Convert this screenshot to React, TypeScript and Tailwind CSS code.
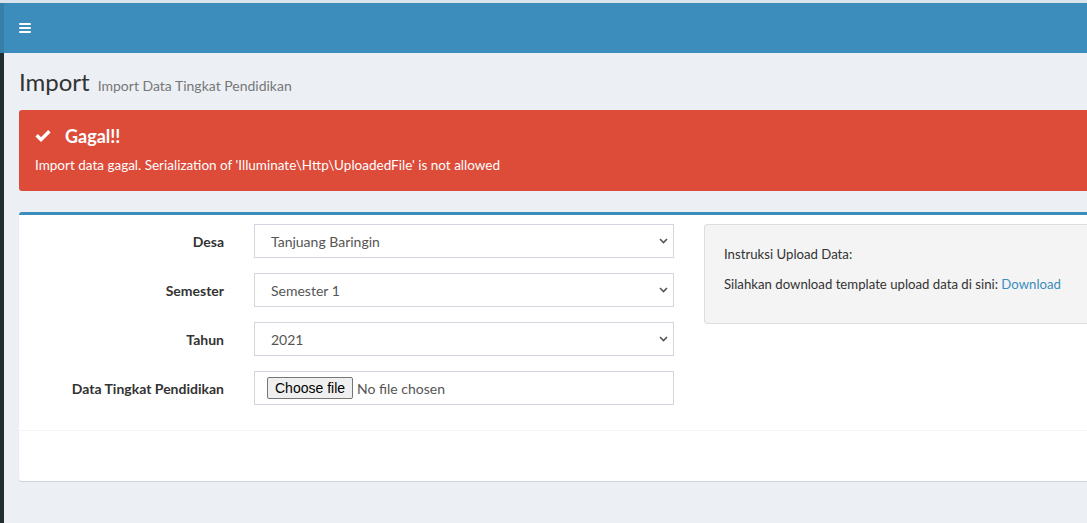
import { useState } from "react";

type FieldRow = {
  label: string;
  options: string[];
};

const selectRows: FieldRow[] = [
  { label: "Desa", options: ["Tanjuang Baringin"] },
  { label: "Semester", options: ["Semester 1", "Semester 2"] },
  { label: "Tahun", options: ["2021", "2020"] },
];

const inputClass =
  "h-[34px] w-[420px] appearance-none border border-[#d2d6de] bg-white pl-[16px] text-[14px] text-[#555] outline-none";

export default function App() {
  const [values, setValues] = useState<Record<string, string>>({});

  return (
    <div
      className="flex h-[523px] w-[1087px] overflow-hidden bg-[#ecf0f5] text-[#333]"
      style={{ fontFamily: "Lato, 'Liberation Sans', sans-serif" }}
    >
      {/* sidebar strip */}
      <div className="flex w-[4px] shrink-0 flex-col">
        <div className="h-[3px] bg-[#d9e4ec]" />
        <div className="h-[50px] bg-[#367fa9]" />
        <div className="flex-1 bg-[#222d32]" />
      </div>

      <div className="flex w-[1400px] shrink-0 flex-col">
        <header className="h-[53px] border-t-[3px] border-[#d9e4ec] bg-[#3c8dbc]">
          <button className="flex h-[50px] items-center px-[15px]">
            <svg width="12" height="12" viewBox="0 0 12 12" fill="#fff">
              <rect x="0" y="1" width="12" height="2" rx="1" />
              <rect x="0" y="5" width="12" height="2" rx="1" />
              <rect x="0" y="9" width="12" height="2" rx="1" />
            </svg>
          </button>
        </header>

        <section className="px-[15px] pt-[15px]">
          <h1 className="flex items-baseline gap-[8px] text-[24px] leading-[28px] text-[#333]">
            Import
            <small className="text-[14px] text-[#777]">Import Data Tingkat Pendidikan</small>
          </h1>
        </section>

        <section className="px-[15px] pt-[10px]">
          <div className="rounded-[3px] bg-[#dd4b39] px-[16px] pt-[14px] pb-[16px] text-white">
            <h4 className="flex items-center gap-[14px] text-[18px] font-bold leading-[24px]">
              <svg width="16" height="14" viewBox="0 0 16 13" fill="#fff">
                <path d="M0.4 7 L2.8 4.6 L6 7.8 L13.2 0.6 L15.6 3 L6 12.6 Z" />
              </svg>
              Gagal!!
            </h4>
            <p className="mt-[7px] text-[13.5px] leading-[20px]">
              Import data gagal. Serialization of 'Illuminate\Http\UploadedFile' is not allowed
            </p>
          </div>

          <div className="mt-[21px] rounded-[3px] border-t-[3px] border-[#3c8dbc] bg-white shadow-[0_1px_1px_rgba(0,0,0,0.12)]">
            <div className="flex px-[10px] pt-[9px] pb-[25px]">
              <div className="flex w-[660px] flex-col gap-[15px]">
                {selectRows.map((row) => (
                  <div key={row.label} className="flex items-center">
                    <label className="w-[210px] pr-[15px] text-right text-[14px] font-bold">
                      {row.label}
                    </label>
                    <div className="relative pl-[15px]">
                      <select
                        className={inputClass}
                        value={values[row.label] ?? row.options[0]}
                        onChange={(e) => setValues({ ...values, [row.label]: e.target.value })}
                      >
                        {row.options.map((o) => (
                          <option key={o}>{o}</option>
                        ))}
                      </select>
                      <svg
                        className="pointer-events-none absolute top-[14px] right-[6px]"
                        width="9"
                        height="6"
                        viewBox="0 0 9 6"
                        fill="none"
                        stroke="#555"
                        strokeWidth="1.6"
                      >
                        <path d="M1 1 L4.5 4.5 L8 1" />
                      </svg>
                    </div>
                  </div>
                ))}
                <div className="flex items-center">
                  <label className="w-[210px] pr-[15px] text-right text-[14px] font-bold">
                    Data Tingkat Pendidikan
                  </label>
                  <div className="pl-[15px]">
                    <div className="flex h-[34px] w-[420px] items-center border border-[#d2d6de] bg-white pl-[12px] text-[14px] text-[#555]">
                      <span
                        className="flex h-[22px] items-center rounded-[2px] border border-[#767676] bg-[#efefef] px-[7px] text-[14px] text-black"
                        style={{ fontFamily: "'Liberation Sans', Arial, sans-serif" }}
                      >
                        Choose file
                      </span>
                      <span className="ml-[4px]">No file chosen</span>
                    </div>
                  </div>
                </div>
              </div>

              <div className="w-[670px] px-[15px]">
                <div className="h-[100px] rounded-[3px] border border-[#ddd] bg-[#f4f4f4] px-[19px] pt-[19px] text-[13.2px] leading-[20px]">
                  <p>Instruksi Upload Data:</p>
                  <p className="mt-[10px]">
                    Silahkan download template upload data di sini:{" "}
                    <a className="text-[#3c8dbc]" href="#">
                      Download
                    </a>
                  </p>
                </div>
              </div>
            </div>
            <div className="h-[51px] border-t border-[#f4f4f4]" />
          </div>
        </section>
      </div>
    </div>
  );
}
